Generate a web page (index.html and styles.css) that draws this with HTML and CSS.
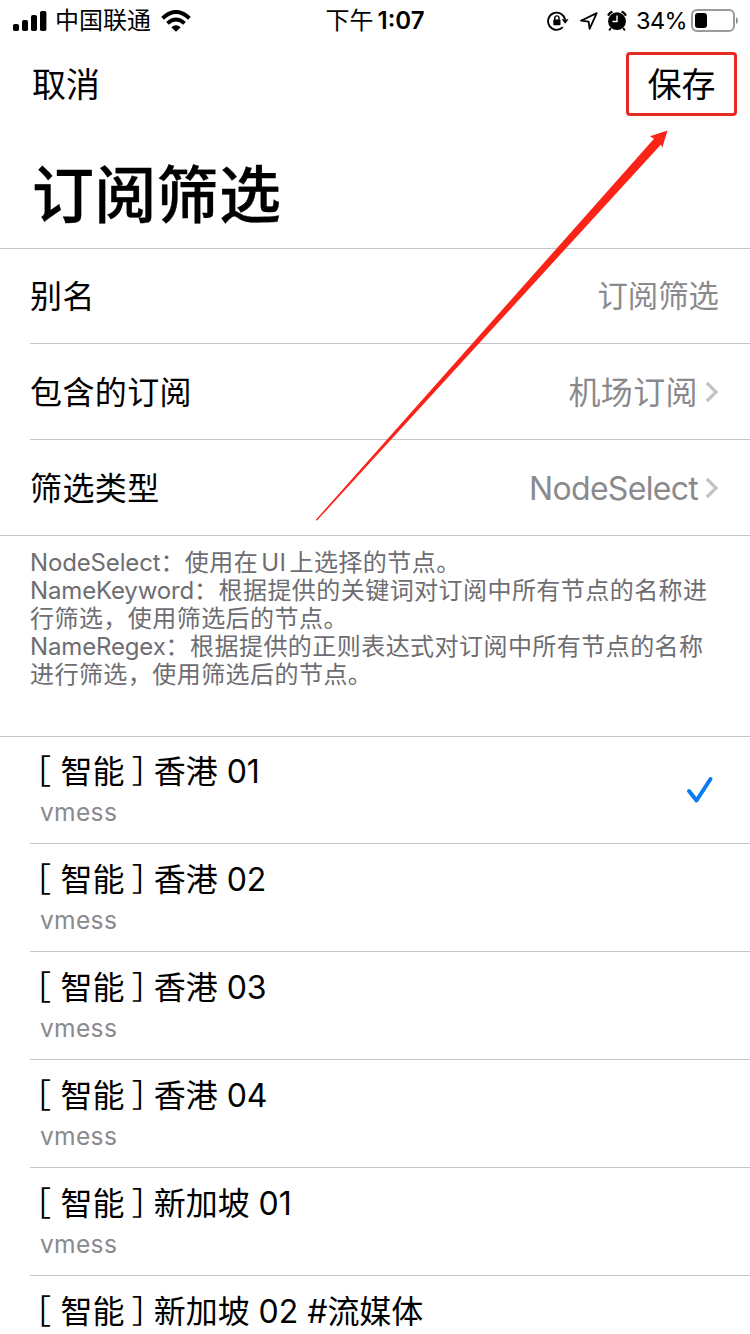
FILE: index.html
```html
<!DOCTYPE html>
<html lang="zh-CN">
<head>
<meta charset="utf-8">
<title>订阅筛选</title>
<link rel="stylesheet" href="styles.css">
</head>
<body>
<main class="screen">
  <header class="status">
    <div class="status-left">
      <svg class="signal" width="34" height="22" viewBox="0 0 34 22"><rect x="0" y="14" width="6" height="7" rx="1.8"/><rect x="9" y="10" width="6" height="11" rx="1.8"/><rect x="18" y="5" width="6" height="16" rx="1.8"/><rect x="27" y="1" width="6.4" height="20" rx="1.8"/></svg>
      <span class="carrier">中国联通</span>
      <svg class="wifi" width="30" height="22" viewBox="0 0 30 22"><path d="M1.6 8.2Q15-4.2 28.4 8.2" fill="none" stroke="#000" stroke-width="4"/><path d="M6.5 13.4Q15 5.6 23.5 13.4" fill="none" stroke="#000" stroke-width="3.8"/><path d="M10.3 17.2Q15 13.2 19.7 17.2L15 21.8Z"/></svg>
    </div>
    <div class="time"><span class="period">下午</span><span class="clock">1:07</span></div>
    <div class="status-right">
      <svg class="lock" width="22" height="22" viewBox="0 0 22 22"><path d="M15.8 17.2A8.6 8.6 0 1 1 18 9.2" fill="none" stroke="#000" stroke-width="1.8"/><path d="M14.6 9.3H21.6L18.2 13.7Z"/><rect x="6.3" y="9.6" width="7.2" height="5.6" rx="0.8"/><path d="M7.8 10V8a2.1 2.1 0 0 1 4.2 0V10" fill="none" stroke="#000" stroke-width="1.4"/></svg>
      <svg class="location" width="20" height="20" viewBox="0 0 20 20"><path d="M2 9.7L17.7 2.1L10.6 17.8L9.6 10.6Z" fill="none" stroke="#000" stroke-width="1.8" stroke-linejoin="round"/></svg>
      <svg class="alarm" width="20" height="22" viewBox="0 0 20 22"><circle cx="10" cy="11.2" r="8.9"/><path d="M1 5.6A10 10 0 0 1 5.4 1.6M14.6 1.6A10 10 0 0 1 19 5.6" fill="none" stroke="#000" stroke-width="2.2"/><path d="M3.8 18L2.2 20.5M16.2 18L17.8 20.5" stroke="#000" stroke-width="1.8"/><path d="M10 5.5V11.5H5.5" fill="none" stroke="#fff" stroke-width="1.4"/></svg>
      <span class="percent">34%</span>
      <svg class="battery" width="48" height="24" viewBox="0 0 48 24"><rect x="1" y="1" width="42" height="21" rx="5" fill="none" stroke="#9b9b9b" stroke-width="2"/><rect x="4" y="4" width="12" height="15" rx="3"/><path d="M45 8Q47 9 47 11.5Q47 14 45 15Z" fill="#8e8e8e"/></svg>
    </div>
  </header>
  <nav class="nav"><span class="cancel">取消</span><span class="save">保存</span></nav>
  <h1 class="title">订阅筛选</h1>

  <section class="form">
    <div class="field"><span class="label">别名</span><span class="value alias">订阅筛选</span></div>
    <div class="field"><span class="label">包含的订阅</span><span class="value"><span class="label">机场订阅</span><svg class="chevron" width="14" height="22" viewBox="0 0 14 22"><path d="M2 2L11 11L2 20"/></svg></span></div>
    <div class="field"><span class="label">筛选类型</span><span class="value"><span class="latin">NodeSelect</span><svg class="chevron" width="14" height="22" viewBox="0 0 14 22"><path d="M2 2L11 11L2 20"/></svg></span></div>
  </section>
  <div class="notes">
    <p><span class="term">NodeSelect</span>：使用在<span class="ui">UI</span>上选择的节点。</p>
    <p><span class="term">NameKeyword</span>：根据提供的关键词对订阅中所有节点的名称进<br>行筛选，使用筛选后的节点。</p>
    <p><span class="term">NameRegex</span>：根据提供的正则表达式对订阅中所有节点的名称<br>进行筛选，使用筛选后的节点。</p>
  </div>

  <section class="nodes">
    <div class="node"><div class="name"><span class="open">［</span>智能<span class="close">］</span>香港 01</div><div class="type">vmess</div><svg class="check" width="28" height="28" viewBox="0 0 28 28"><path d="M3 15L10.5 24.5L24.5 3"/></svg></div>
    <div class="node"><div class="name"><span class="open">［</span>智能<span class="close">］</span>香港 02</div><div class="type">vmess</div></div>
    <div class="node"><div class="name"><span class="open">［</span>智能<span class="close">］</span>香港 03</div><div class="type">vmess</div></div>
    <div class="node"><div class="name"><span class="open">［</span>智能<span class="close">］</span>香港 04</div><div class="type">vmess</div></div>
    <div class="node"><div class="name"><span class="open">［</span>智能<span class="close">］</span>新加坡 01</div><div class="type">vmess</div></div>
    <div class="node"><div class="name"><span class="open">［</span>智能<span class="close">］</span>新加坡 02 #流媒体</div></div>
  </section>
  <svg class="arrow" width="360" height="400" viewBox="0 0 360 400"><path d="M4.6 391L343 9.8L339 7.2L356.5 1.5L351.2 19L350 15.4L6 391.6Z"/></svg>
</main>
</body>
</html>
```
FILE: styles.css
```css
* { box-sizing: border-box; }
body { margin: 0; background: #fff; }
.screen {
  position: relative;
  width: 750px;
  height: 1334px;
  overflow: hidden;
  background: #fff;
  color: #000;
  font-family: Inter, "Noto Sans CJK SC", sans-serif;
  font-size: 32px;
}
svg { flex: none; }

/* Status bar */
.status {
  display: grid;
  grid-template-columns: 1fr auto 1fr;
  height: 40px;
  font-size: 24px;
  line-height: 40px;
}
.status-left, .status-right, .time { display: flex; align-items: center; white-space: nowrap; }
.status-left { padding-left: 13px; }
.status-right { justify-content: flex-end; padding-right: 11px; }
.carrier { margin: 0 10px 0 8px; padding-top: 1px; }
.time { padding-top: 1px; }
.period { margin-right: 4px; }
.clock { font-weight: 600; }
.location { margin: 0 8px 0 10px; }
.percent { margin: 0 4px 0 9px; padding-top: 1px; font-size: 23.5px; letter-spacing: -0.6px; }

/* Navigation */
.nav {
  display: flex;
  justify-content: space-between;
  height: 88px;
  padding: 12px 13px 0 32px;
  font-size: 34px;
  line-height: 66px;
}
.save {
  width: 111px;
  height: 64px;
  border: 3px solid #e52b24;
  border-radius: 4px;
  line-height: 60px;
  text-align: center;
}
.title {
  height: 120px;
  margin: 0;
  padding: 23px 0 0 32px;
  font-size: 62px;
  font-weight: 500;
  letter-spacing: 0.3px;
  line-height: 90px;
  -webkit-text-stroke: 0.3px #000;
}

/* Form rows */
.form { border-top: 1px solid #c4c4c6; border-bottom: 1px solid #c4c4c6; }
.field {
  display: flex;
  justify-content: space-between;
  align-items: center;
  height: 96px;
  margin-left: 30px;
  padding-right: 31px;
  border-bottom: 1px solid #c4c4c6;
}
.field:first-child { height: 95px; }
.field:last-child { height: 95px; border-bottom: 0; }
.label { padding-bottom: 4px; letter-spacing: 0.4px; }
.value { display: flex; align-items: center; color: #8a8a8e; }
.alias { padding-bottom: 4px; font-size: 30.4px; }
.latin { padding-top: 1px; letter-spacing: -0.7px; }
.chevron { margin-left: 7px; fill: none; stroke: #c4c4c6; stroke-width: 3.2; }

.notes {
  height: 200px;
  padding: 13px 0 0 30px;
  color: #6d6d72;
  font-size: 24px;
  letter-spacing: 0.45px;
  line-height: 28px;
  white-space: nowrap;
}
.notes p { margin: 0; }
.term { letter-spacing: -0.15px; }
.ui { margin: 0 3px; }

/* Node list */
.nodes { border-top: 1px solid #c4c4c6; }
.node { position: relative; height: 108px; margin-left: 30px; padding: 12px 0 0 10px; border-bottom: 1px solid #c4c4c6; }
.node:first-child { height: 107px; padding-top: 11px; }
.name { height: 47px; letter-spacing: -0.05px; line-height: 42px; white-space: pre; }
.open, .close { font-family: "Noto Sans CJK SC", sans-serif; font-feature-settings: "halt"; }
.open { margin: 0 9.5px 0 -5px; }
.close { margin: 0 6px 0 7.5px; }
.type { height: 34px; color: #8a8a8e; font-size: 24.6px; letter-spacing: 0.3px; line-height: 35px; }
.check { position: absolute; right: 36px; top: 39px; fill: none; stroke: #087cf0; stroke-width: 4; stroke-linecap: round; stroke-linejoin: round; }
.arrow { position: absolute; left: 311px; top: 129px; fill: #fa2318; }
```
